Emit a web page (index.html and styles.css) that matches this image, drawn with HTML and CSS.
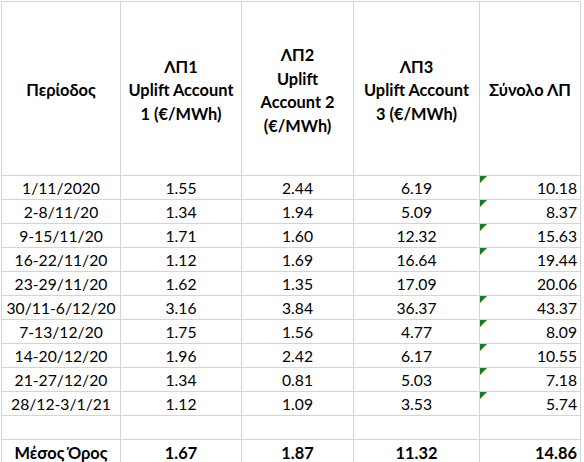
FILE: index.html
```html
<!DOCTYPE html>
<html lang="el">
<head>
<meta charset="utf-8">
<title>Uplift Accounts</title>
<link rel="stylesheet" href="styles.css">
</head>
<body>
<div class="sheet">
  <div class="hd">Περίοδος</div>
  <div class="hd">ΛΠ1<br>Uplift Account<br>1 (€/MWh)</div>
  <div class="hd">ΛΠ2<br>Uplift<br>Account 2<br>(€/MWh)</div>
  <div class="hd">ΛΠ3<br>Uplift Account<br>3 (€/MWh)</div>
  <div class="hd">Σύνολο ΛΠ</div>

  <div class="c">1/11/2020</div><div class="c">1.55</div><div class="c">2.44</div><div class="c">6.19</div><div class="c r flag">10.18</div>
  <div class="c">2-8/11/20</div><div class="c">1.34</div><div class="c">1.94</div><div class="c">5.09</div><div class="c r flag">8.37</div>
  <div class="c">9-15/11/20</div><div class="c">1.71</div><div class="c">1.60</div><div class="c">12.32</div><div class="c r flag">15.63</div>
  <div class="c">16-22/11/20</div><div class="c">1.12</div><div class="c">1.69</div><div class="c">16.64</div><div class="c r flag">19.44</div>
  <div class="c">23-29/11/20</div><div class="c">1.62</div><div class="c">1.35</div><div class="c">17.09</div><div class="c r">20.06</div>
  <div class="c">30/11-6/12/20</div><div class="c">3.16</div><div class="c">3.84</div><div class="c">36.37</div><div class="c r flag">43.37</div>
  <div class="c">7-13/12/20</div><div class="c">1.75</div><div class="c">1.56</div><div class="c">4.77</div><div class="c r flag">8.09</div>
  <div class="c">14-20/12/20</div><div class="c">1.96</div><div class="c">2.42</div><div class="c">6.17</div><div class="c r flag">10.55</div>
  <div class="c">21-27/12/20</div><div class="c">1.34</div><div class="c">0.81</div><div class="c">5.03</div><div class="c r flag">7.18</div>
  <div class="c">28/12-3/1/21</div><div class="c">1.12</div><div class="c">1.09</div><div class="c">3.53</div><div class="c r flag">5.74</div>

  <div class="c"></div><div class="c"></div><div class="c"></div><div class="c"></div><div class="c"></div>

  <div class="c b">Μέσος Όρος</div><div class="c b">1.67</div><div class="c b">1.87</div><div class="c b">11.32</div><div class="c r b">14.86</div>
</div>
</body>
</html>
```
FILE: styles.css
```css
html, body {
  margin: 0;
  padding: 0;
  background: #ffffff;
}

body {
  font-family: Lato, "Noto Sans", sans-serif;
  font-size: 15.7px;
  color: #000000;
  overflow: hidden;
}

.sheet {
  display: grid;
  grid-template-columns: 118px 120px 111px 125px 100px;
  grid-template-rows: 173px;
  grid-auto-rows: 23px;
  gap: 1px;
  padding: 1px;
  margin: 1px 0 0 1px;
  width: max-content;
  background: #d4d4d4;
}

.hd {
  background: #ffffff;
  font-weight: 700;
  font-size: 16.4px;
  text-align: center;
  line-height: 23.5px;
  display: flex;
  align-items: center;
  justify-content: center;
  padding-top: 3px;
  box-sizing: border-box;
  white-space: nowrap;
}

.c {
  background: #ffffff;
  text-align: center;
  line-height: 21px;
  padding-top: 2px;
  white-space: nowrap;
  position: relative;
}

.r {
  text-align: right;
  padding-right: 3px;
}

.b {
  font-weight: 700;
  font-size: 16.4px;
}

.flag::before {
  content: "";
  position: absolute;
  left: 0;
  top: 0;
  width: 0;
  height: 0;
  border-top: 7px solid #1e7b1e;
  border-right: 7px solid transparent;
}
```
